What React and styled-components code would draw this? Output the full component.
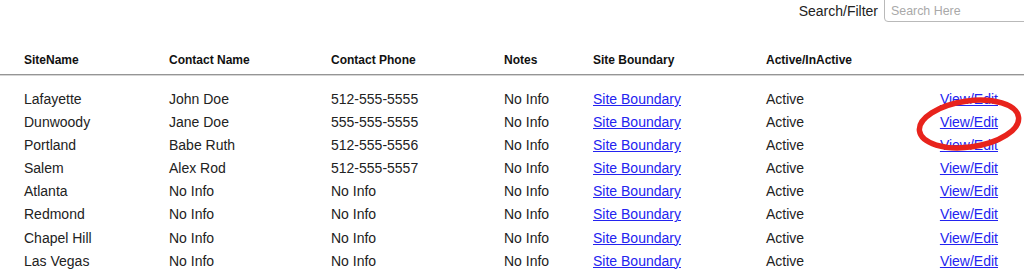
import React from "react";
import styled, { createGlobalStyle } from "styled-components";

const GlobalStyle = createGlobalStyle`
  html, body { margin: 0; padding: 0; background: #fff; overflow: hidden; }
  body { font-family: "Liberation Sans", Arial, Helvetica, sans-serif; color: #222; }
`;

const Page = styled.div`
  position: relative;
  width: 1024px;
  height: 276px;
  overflow: hidden;
`;

const TopBar = styled.div`
  display: flex;
  justify-content: flex-end;
  align-items: center;
  gap: 6px;
  height: 22px;
  margin-right: -14px;
`;

const FilterLabel = styled.label`
  font-size: 14px;
  color: #222;
  line-height: 16px;
`;

const SearchInput = styled.input`
  box-sizing: border-box;
  width: 154px;
  height: 27px;
  margin-top: -5px;
  padding: 5px 0 0 6px;
  border: 1px solid #b9b9b9;
  border-radius: 4px;
  font-family: "Liberation Sans", Arial, sans-serif;
  font-size: 12.4px;
  color: #222;
  outline: none;
  &::placeholder { color: #a9a9a9; }
`;

const Row = styled.div`
  display: grid;
  grid-template-columns: 145px 162px 173px 89px 173px 1fr auto;
  padding: 0 26px 0 24px;
  align-items: center;
`;

const HeadRow = styled(Row)`
  margin-top: 31px;
  padding-bottom: 7px;
  border-bottom: 1px solid #959595;
  box-shadow: 0 1px 0 #d6d6d6;
`;

const HeadCell = styled.div`
  font-size: 12px;
  font-weight: bold;
  color: #111;
  line-height: 14px;
  white-space: nowrap;
`;

const Body = styled.div`
  padding-top: 13px;
`;

const Cell = styled.div`
  font-size: 14px;
  line-height: 23.1px;
  color: #222;
  white-space: nowrap;
`;

const Link = styled.a`
  font-size: 14px;
  line-height: 23px;
  color: #2323f0;
  text-decoration: underline;
  white-space: nowrap;
  cursor: pointer;
`;

const Annotation = styled.svg`
  position: absolute;
  left: 912px;
  top: 94px;
  width: 112px;
  height: 62px;
  pointer-events: none;
`;

const rows = [
  ["Lafayette", "John Doe", "512-555-5555"],
  ["Dunwoody", "Jane Doe", "555-555-5555"],
  ["Portland", "Babe Ruth", "512-555-5556"],
  ["Salem", "Alex Rod", "512-555-5557"],
  ["Atlanta", "No Info", "No Info"],
  ["Redmond", "No Info", "No Info"],
  ["Chapel Hill", "No Info", "No Info"],
  ["Las Vegas", "No Info", "No Info"],
];

export default function App() {
  return (
    <Page>
      <GlobalStyle />
      <TopBar>
        <FilterLabel htmlFor="search">Search/Filter</FilterLabel>
        <SearchInput id="search" placeholder="Search Here" />
      </TopBar>
      <HeadRow>
        <HeadCell>SiteName</HeadCell>
        <HeadCell>Contact Name</HeadCell>
        <HeadCell>Contact Phone</HeadCell>
        <HeadCell>Notes</HeadCell>
        <HeadCell>Site Boundary</HeadCell>
        <HeadCell>Active/InActive</HeadCell>
        <HeadCell />
      </HeadRow>
      <Body>
        {rows.map(([site, contact, phone]) => (
          <Row key={site}>
            <Cell>{site}</Cell>
            <Cell>{contact}</Cell>
            <Cell>{phone}</Cell>
            <Cell>No Info</Cell>
            <Cell><Link>Site Boundary</Link></Cell>
            <Cell>Active</Cell>
            <Cell><Link>View/Edit</Link></Cell>
          </Row>
        ))}
      </Body>
      <Annotation viewBox="0 0 112 62">
        <ellipse
          cx="57"
          cy="30"
          rx="50"
          ry="23"
          fill="none"
          stroke="#e8231c"
          strokeWidth="5.5"
          transform="rotate(-8 57 30)"
        />
      </Annotation>
    </Page>
  );
}
